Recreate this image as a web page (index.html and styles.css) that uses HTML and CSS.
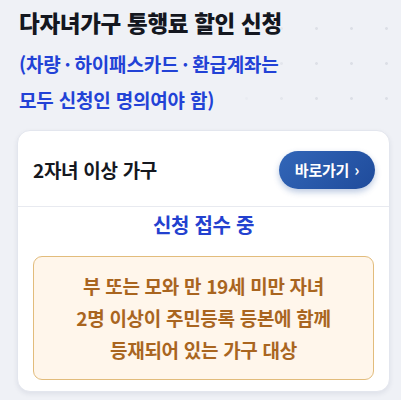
FILE: index.html
```html
<!DOCTYPE html>
<html lang="ko">
<head>
<meta charset="utf-8">
<link rel="stylesheet" href="styles.css">
</head>
<body>
<div class="page">
  <header class="intro">
    <h1 class="title">다자녀가구 통행료 할인 신청</h1>
    <p class="subtitle">(차량<span class="dot">·</span>하이패스카드<span class="dot">·</span>환급계좌는<br>모두 신청인 명의여야 함)</p>
  </header>
  <section class="card">
    <div class="card-head">
      <h2 class="card-title">2자녀 이상 가구</h2>
      <a class="go-btn" href="#">바로가기 <span class="chev">›</span></a>
    </div>
    <div class="card-body">
      <p class="status">신청 접수 중</p>
      <div class="notice">부 또는 모와 만 19세 미만 자녀<br>2명 이상이 주민등록 등본에 함께<br>등재되어 있는 가구 대상</div>
    </div>
  </section>
</div>
</body>
</html>
```
FILE: styles.css
```css
* { box-sizing: border-box; margin: 0; padding: 0; }
html, body { width: 401px; height: 400px; overflow: hidden; }
body {
  background: #eff1f6;
  font-family: "Noto Sans CJK KR", "Noto Sans", sans-serif;
}
.page {
  padding: 7px 11px 8px 17px;
}
.intro {
  padding-left: 2px;
  margin-right: -11px;
  background-image:
    linear-gradient(to right, #eff1f6 52%, rgba(239,241,246,0) 80%),
    radial-gradient(circle, #dcdfe6 1.2px, transparent 1.6px);
  background-size: 100% 100%, 35px 35px;
  background-position: 0 0, 2px 4px;
}
.title {
  font-size: 22.5px;
  font-weight: 800;
  line-height: 30px;
  color: #14171f;
  letter-spacing: -0.3px;
}
.subtitle {
  margin-top: 9px;
  font-size: 19px;
  font-weight: 700;
  line-height: 36px;
  color: #2242d6;
  letter-spacing: -0.2px;
}
.dot { margin: 0 4px; }
.card {
  margin-top: 12px;
  background: #fff;
  border-radius: 13px;
  border: 1px solid #e3e6ee;
  box-shadow: 0 2px 5px rgba(30, 40, 80, 0.08);
  height: 262px;
}
.card-head {
  height: 76px;
  display: flex;
  align-items: center;
  justify-content: space-between;
  padding: 2px 14px 0 15px;
  border-bottom: 1px solid #e8eaf0;
}
.card-title {
  font-size: 19px;
  font-weight: 700;
  color: #15181f;
  letter-spacing: -0.3px;
}
.go-btn {
  display: inline-flex;
  align-items: center;
  justify-content: center;
  gap: 5px;
  width: 96px;
  height: 38px;
  border-radius: 19px;
  background: linear-gradient(135deg, #3266b8 0%, #1f4b9b 100%);
  box-shadow: 0 3px 6px rgba(31, 75, 155, 0.3);
  color: #fff;
  font-size: 15px;
  font-weight: 700;
  text-decoration: none;
  letter-spacing: -0.2px;
}
.chev { font-size: 16px; line-height: 1; margin-top: -1px; }
.card-body {
  padding: 2px 15px 15px 15px;
}
.status {
  text-align: center;
  font-size: 20px;
  font-weight: 700;
  line-height: 32px;
  color: #2341cf;
  letter-spacing: -0.3px;
}
.notice {
  margin-top: 15px;
  border: 1px solid #e2bc7c;
  border-radius: 9px;
  background: #fff6eb;
  padding: 13px 0;
  text-align: center;
  font-size: 19px;
  font-weight: 700;
  line-height: 32px;
  color: #a9651f;
  letter-spacing: -0.3px;
}
```
